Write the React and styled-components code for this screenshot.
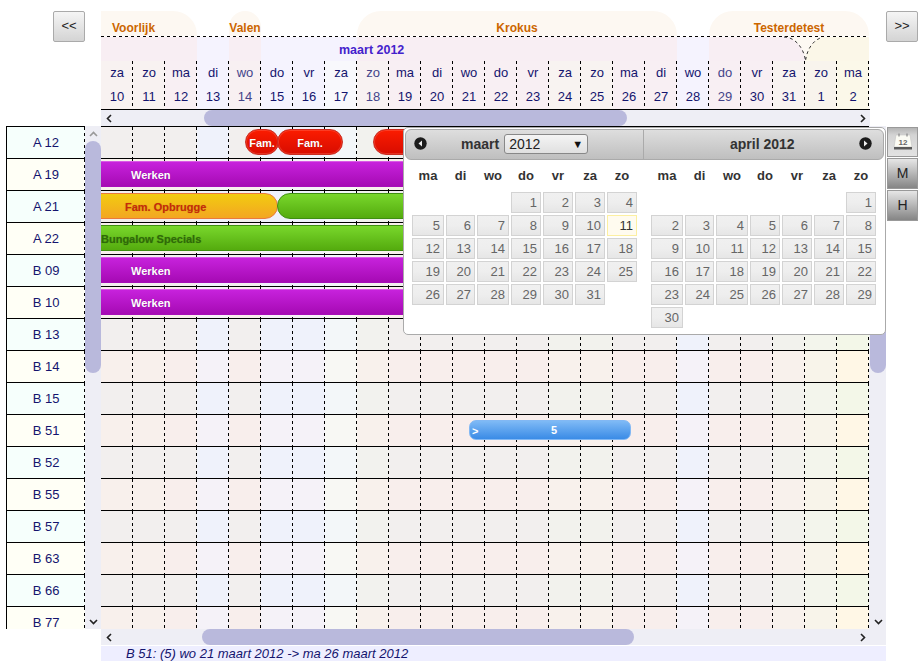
import React from "react";
import styled, { createGlobalStyle } from "styled-components";

const GlobalStyle = createGlobalStyle`
  html, body { margin: 0; padding: 0; background: #fff; overflow: hidden; }
  * { box-sizing: border-box; }
  body { font-family: "Liberation Sans", Arial, sans-serif; font-size: 13px; color: #14146e; }
`;

const DAYS = [
  { d: "za", n: 10, top: "#f8eef3", bottom: "#f8f2f1", grey: "#f2efee", pink: "#f8f0ec" },
  { d: "zo", n: 11, top: "#f8eef3", bottom: "#f8f2f1", grey: "#f2efee", pink: "#f8f0ec" },
  { d: "ma", n: 12, top: "#f8eef3", bottom: "#f8eff3", grey: "#f2efee", pink: "#f8eeec" },
  { d: "di", n: 13, top: "#f5f3fe", bottom: "#f5f3fe", grey: "#eff2fb", pink: "#f5f2f8" },
  { d: "wo", n: 14, top: "#f8eef3", bottom: "#f8f0f2", grey: "#f2efee", pink: "#f8eeec", soft: true },
  { d: "do", n: 15, top: "#f5f3fe", bottom: "#f5f3fe", grey: "#eff2fb", pink: "#f5f2f8" },
  { d: "vr", n: 16, top: "#f5f3fe", bottom: "#f5f3fe", grey: "#eff2fb", pink: "#f5f2f8" },
  { d: "za", n: 17, top: "#f5f3fe", bottom: "#f8f8fc", grey: "#f3f7f9", pink: "#f8f8f4" },
  { d: "zo", n: 18, top: "#f8eef3", bottom: "#f8f2f2", grey: "#f2f2ee", pink: "#f8f1ec", soft: true },
  { d: "ma", n: 19, top: "#f8eef3", bottom: "#f8eff3", grey: "#f2efee", pink: "#f8eeec" },
  { d: "di", n: 20, top: "#f8eef3", bottom: "#f8eff3", grey: "#f2efee", pink: "#f8eeec" },
  { d: "wo", n: 21, top: "#f8eef3", bottom: "#f8eff3", grey: "#f2efee", pink: "#f8eeec" },
  { d: "do", n: 22, top: "#f8eef3", bottom: "#f8eff3", grey: "#f2efee", pink: "#f8eeec" },
  { d: "vr", n: 23, top: "#f8eef3", bottom: "#f8eff3", grey: "#f2efee", pink: "#f8eeec" },
  { d: "za", n: 24, top: "#f8eef3", bottom: "#f8f3f1", grey: "#f2f2ed", pink: "#f8f1ec" },
  { d: "zo", n: 25, top: "#f8eef3", bottom: "#f8f3f1", grey: "#f2f2ed", pink: "#f8f1ec" },
  { d: "ma", n: 26, top: "#f8eef3", bottom: "#f8eff3", grey: "#f2efee", pink: "#f8eeec" },
  { d: "di", n: 27, top: "#f8eef3", bottom: "#f8eff3", grey: "#f2efee", pink: "#f8eeec" },
  { d: "wo", n: 28, top: "#f5f3fe", bottom: "#f5f3fe", grey: "#eff2fb", pink: "#f5f2f8" },
  { d: "do", n: 29, top: "#f8eef3", bottom: "#f8eff3", grey: "#f2efee", pink: "#f8eeec", soft: true },
  { d: "vr", n: 30, top: "#f8eef3", bottom: "#f8eff3", grey: "#f2efee", pink: "#f8eeec" },
  { d: "za", n: 31, top: "#f8eef3", bottom: "#f8f3f1", grey: "#f2f2ed", pink: "#f8f1ec" },
  { d: "zo", n: 1, top: "#fbf7e8", bottom: "#f8f4ed", grey: "#f3f5ec", pink: "#f8f4ea" },
  { d: "ma", n: 2, top: "#fbf7e8", bottom: "#fbf8e9", grey: "#f3f7e8", pink: "#fff7e6" },
];

const SEASONS = [
  { name: "Voorlijk", cols: 3, corners: "0 24px 0 0", align: "left" },
  { cols: 1 },
  { name: "Valen", cols: 1, corners: "16px 16px 0 0" },
  { cols: 3 },
  { name: "Krokus", cols: 10, corners: "24px 24px 0 0" },
  { cols: 1 },
  { name: "Testerdetest", cols: 5, corners: "24px 24px 0 0" },
];

const ROOMS = [
  "A 12", "A 19", "A 21", "A 22", "B 09", "B 10", "B 13", "B 14",
  "B 15", "B 51", "B 52", "B 55", "B 57", "B 63", "B 66", "B 77",
];

const BARS = {
  "A 12": [
    { kind: "red", left: 144, width: 34, text: "Fam." },
    { kind: "red", left: 176, width: 66, text: "Fam." },
    { kind: "red", left: 272, width: 60, text: "" },
  ],
  "A 19": [{ kind: "purple", left: -1, width: 321, text: "Werken", flat: true, start: 30 }],
  "A 21": [
    { kind: "orange", left: -20, width: 197, text: "Fam. Opbrugge", start: 43 },
    { kind: "green", left: 176, width: 160, text: "" },
  ],
  "A 22": [{ kind: "green", left: -1, width: 321, text: "Bungalow Specials", flat: true, start: 0 }],
  "B 09": [{ kind: "purple", left: -1, width: 321, text: "Werken", flat: true, start: 30 }],
  "B 10": [{ kind: "purple", left: -1, width: 321, text: "Werken", flat: true, start: 30 }],
};

const MONTHS = [
  { name: "maart", offset: 3, days: 31, today: 11 },
  { name: "april", offset: 6, days: 30 },
];

const WEEKDAYS = ["ma", "di", "wo", "do", "vr", "za", "zo"];

// the screenshot's dashes are 3 on, 3 off, wider than a 1px css dashed border
const dashY = "repeating-linear-gradient(to bottom, #000 0 3px, transparent 3px 6px) right top / 1px 100% no-repeat";
const dashX = "repeating-linear-gradient(to right, #000 0 3px, transparent 3px 6px) left bottom / 100% 1px no-repeat";

const Page = styled.div`
  position: relative;
  width: 924px;
  height: 668px;
  display: flex;
  flex-direction: column;
  overflow: hidden;
  background: #fff;
`;

const TopRow = styled.div`
  display: flex;
  align-items: flex-start;
  padding-top: 11px;
`;

const NavSlot = styled.div`
  width: ${(p) => p.$width}px;
  padding-left: ${(p) => p.$pad}px;
`;

const NavButton = styled.button`
  width: 32px;
  height: 31px;
  padding: 0 0 3px;
  border: 1px solid #aaa;
  border-radius: 2px;
  background: linear-gradient(#f5f5f5, #d4d4d4);
  color: #222;
  font: 13px "Liberation Sans", Arial, sans-serif;
`;

const Header = styled.div`
  position: relative;
  width: 768px;
`;

const SeasonBand = styled.div`
  display: flex;
  height: 26px;
  background: ${dashX};
`;

const Season = styled.div`
  width: ${(p) => p.$cols * 32}px;
  height: 25px;
  padding: ${(p) => (p.$align === "left" ? "9px 0 0 11px" : "9px 0 0 0")};
  background: ${(p) => (p.$named ? "#fdf8f2" : "transparent")};
  border-radius: ${(p) => p.$corners || 0};
  color: #cc6600;
  font-size: 12px;
  font-weight: bold;
  line-height: 16px;
  text-align: ${(p) => p.$align || "center"};
  white-space: nowrap;
`;

const DayColumns = styled.div`
  display: flex;
  height: 72px;
`;

const DayColumn = styled.div`
  width: 32px;
  display: flex;
  flex-direction: column;
`;

const MonthSpacer = styled.div`
  height: 24px;
  background: ${(p) => p.$tint};
`;

const DayCell = styled.div`
  height: 48px;
  background: ${dashY}, ${(p) => p.$tint};
  color: ${(p) => (p.$soft ? "#44448a" : "#14146e")};
  font-size: 13px;
  line-height: 24px;
  text-align: center;
`;

const DayText = styled.div`
  height: 24px;
`;

const MonthLabel = styled.div`
  position: absolute;
  left: 238px;
  top: 31px;
  color: #4422cc;
  font-size: 12.5px;
  font-weight: bold;
  line-height: 16px;
`;

const SeasonCurve = styled.svg`
  position: absolute;
  left: 660px;
  top: 25px;
`;

const HeaderRule = styled.div`
  margin-left: 101px;
  width: 769px;
  height: 1px;
  background: #000;
`;

const ScrollX = styled.div`
  display: flex;
  align-items: stretch;
  flex: none;
  margin-left: 101px;
  width: ${(p) => p.$width}px;
  height: 16px;
  padding-right: ${(p) => p.$pad || 0}px;
  background: #eeeef5;
`;

const ThumbX = styled.div`
  margin-left: ${(p) => p.$offset}px;
  width: ${(p) => p.$length}px;
  border-radius: 8px;
  background: #b9b9dc;
`;

const ArrowSlot = styled.div`
  flex: none;
  width: 16px;
  height: 16px;
  display: flex;
  align-items: center;
  justify-content: center;
  margin-left: ${(p) => (p.$end ? "auto" : 0)};
  margin-top: ${(p) => (p.$bottom ? "auto" : 0)};
`;

const Body = styled.div`
  display: flex;
  align-items: flex-start;
  height: 503px;
  flex: none;
`;

const Labels = styled.div`
  width: 79px;
  height: 503px;
  margin-left: 6px;
  overflow: hidden;
`;

const LabelRow = styled.div`
  height: 32px;
  border-top: 1px solid #000;
  border-left: 1px solid #000;
  background: ${dashY}, ${(p) => (p.$odd ? "#fffff6" : "#f6fffc")};
  color: #14146e;
  font-size: 13px;
  line-height: 31px;
  text-align: center;
`;

const ScrollY = styled.div`
  display: flex;
  flex-direction: column;
  width: ${(p) => p.$width}px;
  height: 503px;
  padding-left: ${(p) => p.$pad || 0}px;
  background: #eeeef5;
`;

const ThumbY = styled.div`
  flex: none;
  width: 16px;
  height: 232px;
  margin-top: -1px;
  border-radius: 8px;
  background: #b9b9dc;
`;

const Grid = styled.div`
  width: 768px;
  height: 503px;
  overflow: hidden;
`;

const GridRow = styled.div`
  position: relative;
  display: flex;
  height: 32px;
  border-top: 1px solid #000;
`;

const GridCell = styled.div`
  width: 32px;
  background: ${dashY}, ${(p) => p.$tint};
`;

const barColours = {
  red: "border: 1px solid #c92b20; box-shadow: inset 0 0 0 1px rgba(255,120,100,0.35); background: linear-gradient(#fb1c00, #d80c00); color: #fff;",
  purple: "border: 1px solid #a70db8; border-top-color: #d95ae6; background: linear-gradient(#c722dc, #a60ab4); color: #fff;",
  orange: "border: 1px solid #ea7a3c; background: linear-gradient(#f2cc10, #f3a622); color: #c82a0a;",
  green: "border: 1px solid #3f8f10; background: linear-gradient(#79d72c, #54ab0e); color: #2f6a08;",
};

const Bar = styled.div`
  position: absolute;
  top: 2px;
  left: ${(p) => p.$left}px;
  width: ${(p) => p.$width}px;
  height: 26px;
  padding-left: ${(p) => p.$pad || 0}px;
  border-radius: ${(p) => (p.$flat ? "0" : "13px")};
  ${(p) => barColours[p.$kind]}
  font-size: 11px;
  font-weight: bold;
  line-height: 26px;
  text-align: ${(p) => (p.$pad === undefined ? "center" : "left")};
  white-space: nowrap;
  text-shadow: 0 0 1px rgba(0, 0, 0, 0.25);
`;

const BookingBar = styled.div`
  position: absolute;
  top: 5px;
  left: 368px;
  width: 162px;
  height: 20px;
  display: flex;
  justify-content: center;
  padding-left: 8px;
  border: 1px solid #82b8f4;
  border-radius: 7px;
  background: linear-gradient(#7fbaf6, #3a8be6);
  color: #fff;
  font-size: 11px;
  font-weight: bold;
  line-height: 19px;
`;

const BookingMark = styled.span`
  position: absolute;
  left: 2px;
  top: 1px;
`;

const ViewTabs = styled.div`
  display: flex;
  flex-direction: column;
  gap: 1px;
  width: 31px;
  margin: 1px 0 0 1px;
`;

const ViewTab = styled.div`
  display: flex;
  align-items: center;
  justify-content: center;
  height: ${(p) => p.$height}px;
  padding-bottom: ${(p) => (p.$active ? 0 : 2)}px;
  border: 1px solid #999;
  background: ${(p) =>
    p.$active ? "linear-gradient(#b4b4b4, #d4d4d4 25%, #e2e2e2)" : "linear-gradient(#e6e6e6, #bbb 45%, #858585)"};
  color: #222;
  font-size: 14px;
`;

const Status = styled.div`
  flex: none;
  margin: 1px 0 0 101px;
  width: 785px;
  height: 15px;
  padding-left: 25px;
  background: #eeeeff;
  color: #14146e;
  font-size: 13px;
  font-style: italic;
  line-height: 15px;
`;

const Popover = styled.div`
  position: absolute;
  left: 403px;
  top: 127px;
  width: 483px;
  height: 208px;
  padding: 1px;
  border: 1px solid #aaa;
  border-radius: 5px;
  background: #fff;
  z-index: 2;
`;

const PopoverHeader = styled.div`
  display: flex;
  height: 31px;
  border: 1px solid #aaa;
  border-radius: 6px;
  background: linear-gradient(#dedede, #bfbfbf);
  color: #333;
  font-size: 14px;
  font-weight: bold;
`;

const HeaderPane = styled.div`
  display: flex;
  align-items: center;
  width: ${(p) => p.$width}px;
  padding: 0 8px 2px;
  border-right: ${(p) => (p.$divider ? "1px solid #aaa" : "none")};
`;

const PaneTitle = styled.span`
  display: flex;
  margin-left: ${(p) => p.$gap}px;
`;

const YearSelect = styled.div`
  display: flex;
  align-items: center;
  justify-content: space-between;
  width: 84px;
  height: 20px;
  margin-left: 5px;
  padding: 0 4px 0 4px;
  border: 1px solid #888;
  border-radius: 3px;
  background: linear-gradient(#f4f4f4, #e0e0e0);
  color: #222;
  font-size: 14px;
  font-weight: normal;
`;

const SelectArrow = styled.span`
  color: #111;
  font-size: 11px;
`;

const MonthPanes = styled.div`
  display: flex;
  gap: 14px;
  padding-left: 7px;
`;

const MonthGrid = styled.div`
  display: grid;
  grid-template-columns: 32px 29px 32px 30px 30px 30px 30px;
  grid-auto-rows: 21px;
  grid-template-rows: 30px;
  gap: 2px;
`;

const Weekday = styled.div`
  color: #333;
  font-size: 13px;
  font-weight: bold;
  line-height: 31px;
  text-align: center;
`;

const DateCell = styled.div`
  padding-right: 3px;
  border: 1px solid ${(p) => (p.$today ? "#fcefa1" : "#d3d3d3")};
  background: ${(p) => (p.$today ? "#fffbef" : "linear-gradient(#f0f0f0, #eeeeee 50%, #e6e6e6)")};
  color: ${(p) => (p.$today ? "#333" : "#666")};
  font-size: 13px;
  line-height: 19px;
  text-align: right;
`;

function Chevron({ dir }) {
  const paths = {
    left: "M6 1 L2.5 4.5 L6 8",
    right: "M3 1 L6.5 4.5 L3 8",
    up: "M1 6 L4.5 2.5 L8 6",
    down: "M1 3 L4.5 6.5 L8 3",
  };
  return (
    <svg width="9" height="9" viewBox="0 0 9 9">
      <path d={paths[dir]} fill="none" stroke={dir === "up" ? "#999" : "#222"} strokeWidth="1.6" />
    </svg>
  );
}

function RoundArrow({ dir }) {
  return (
    <svg width="13" height="13" viewBox="0 0 13 13">
      <circle cx="6.5" cy="6.5" r="6.2" fill="#1c1c1c" />
      <path d={dir === "left" ? "M8 3.5 L4.5 6.5 L8 9.5 Z" : "M5 3.5 L8.5 6.5 L5 9.5 Z"} fill="#eee" />
    </svg>
  );
}

function CalendarIcon() {
  return (
    <svg width="20" height="18" viewBox="0 0 20 18">
      <path d="M3 2 H17 L19 14 H1 Z" fill="#fbfbf4" stroke="#c4c4c4" strokeWidth="0.6" />
      <path d="M1 14 H19 V16.5 H1 Z" fill="#5a5a5a" />
      <path d="M6 0.5 V3.5 M14 0.5 V3.5" stroke="#888" strokeWidth="1.2" />
      <text x="10" y="11.5" fontSize="8" fontWeight="bold" fontFamily="Liberation Sans" textAnchor="middle" fill="#666">
        12
      </text>
    </svg>
  );
}

function Month({ month }) {
  const blanks = Array.from({ length: month.offset });
  const dates = Array.from({ length: month.days }, (_, i) => i + 1);
  return (
    <MonthGrid>
      {WEEKDAYS.map((w) => (
        <Weekday key={w}>{w}</Weekday>
      ))}
      {blanks.map((_, i) => (
        <div key={i} />
      ))}
      {dates.map((n) => (
        <DateCell key={n} $today={n === month.today}>
          {n}
        </DateCell>
      ))}
    </MonthGrid>
  );
}

export default function App() {
  return (
    <Page>
      <GlobalStyle />
      <TopRow>
        <NavSlot $width={101} $pad={53}>
          <NavButton>&lt;&lt;</NavButton>
        </NavSlot>
        <Header>
          <SeasonBand>
            {SEASONS.map((s, i) => (
              <Season key={i} $cols={s.cols} $corners={s.corners} $align={s.align} $named={!!s.name}>
                {s.name}
              </Season>
            ))}
          </SeasonBand>
          <DayColumns>
            {DAYS.map((day, i) => (
              <DayColumn key={i}>
                <MonthSpacer $tint={day.top} />
                <DayCell $tint={day.bottom} $soft={day.soft}>
                  <DayText>{day.d}</DayText>
                  <DayText>{day.n}</DayText>
                </DayCell>
              </DayColumn>
            ))}
          </DayColumns>
          <MonthLabel>maart 2012</MonthLabel>
          <SeasonCurve width="60" height="26" viewBox="0 0 60 26">
            <path d="M23 1 C34 1 43 12 44.5 25 C46 12 54 1 65 1 Z" fill="#fdf9f3" />
            <path d="M23 1 C34 1 43 12 44.5 25 C46 12 54 1 65 1" fill="none" stroke="#333" strokeWidth="1" strokeDasharray="3 3" />
          </SeasonCurve>
        </Header>
        <NavSlot $width={55} $pad={17}>
          <NavButton>&gt;&gt;</NavButton>
        </NavSlot>
      </TopRow>
      <HeaderRule />
      <ScrollX $width={769}>
        <ArrowSlot>
          <Chevron dir="left" />
        </ArrowSlot>
        <ThumbX $offset={87} $length={423} />
        <ArrowSlot $end>
          <Chevron dir="right" />
        </ArrowSlot>
      </ScrollX>
      <Body>
        <Labels>
          {ROOMS.map((room, i) => (
            <LabelRow key={room} $odd={i % 2 === 1}>
              {room}
            </LabelRow>
          ))}
        </Labels>
        <ScrollY $width={16}>
          <ArrowSlot>
            <Chevron dir="up" />
          </ArrowSlot>
          <ThumbY />
          <ArrowSlot $bottom>
            <Chevron dir="down" />
          </ArrowSlot>
        </ScrollY>
        <Grid>
          {ROOMS.map((room, i) => (
            <GridRow key={room}>
              {DAYS.map((day, c) => (
                <GridCell key={c} $tint={i % 2 === 1 ? day.pink : day.grey} />
              ))}
              {(BARS[room] || []).map((b, k) => (
                <Bar key={k} $kind={b.kind} $left={b.left} $width={b.width} $flat={b.flat} $pad={b.start}>
                  {b.text}
                </Bar>
              ))}
              {room === "B 51" && (
                <BookingBar>
                  <BookingMark>&gt;</BookingMark>5
                </BookingBar>
              )}
            </GridRow>
          ))}
        </Grid>
        <ScrollY $width={17} $pad={1}>
          <ArrowSlot>
            <Chevron dir="up" />
          </ArrowSlot>
          <ThumbY />
          <ArrowSlot $bottom>
            <Chevron dir="down" />
          </ArrowSlot>
        </ScrollY>
        <ViewTabs>
          <ViewTab $active $height={30}>
            <CalendarIcon />
          </ViewTab>
          <ViewTab $height={31}>M</ViewTab>
          <ViewTab $height={31}>H</ViewTab>
        </ViewTabs>
      </Body>
      <ScrollX $width={785} $pad={16}>
        <ArrowSlot>
          <Chevron dir="left" />
        </ArrowSlot>
        <ThumbX $offset={85} $length={432} />
        <ArrowSlot $end>
          <Chevron dir="right" />
        </ArrowSlot>
      </ScrollX>
      <Status>B 51: (5) wo 21 maart 2012 -&gt; ma 26 maart 2012</Status>
      <Popover>
        <PopoverHeader>
          <HeaderPane $width={238} $divider>
            <RoundArrow dir="left" />
            <PaneTitle $gap={34}>maart</PaneTitle>
            <YearSelect>
              2012
              <SelectArrow>▼</SelectArrow>
            </YearSelect>
          </HeaderPane>
          <HeaderPane $width={239}>
            <PaneTitle $gap={78}>april 2012</PaneTitle>
            <PaneTitle $gap={64}>
              <RoundArrow dir="right" />
            </PaneTitle>
          </HeaderPane>
        </PopoverHeader>
        <MonthPanes>
          {MONTHS.map((m) => (
            <Month key={m.name} month={m} />
          ))}
        </MonthPanes>
      </Popover>
    </Page>
  );
}
